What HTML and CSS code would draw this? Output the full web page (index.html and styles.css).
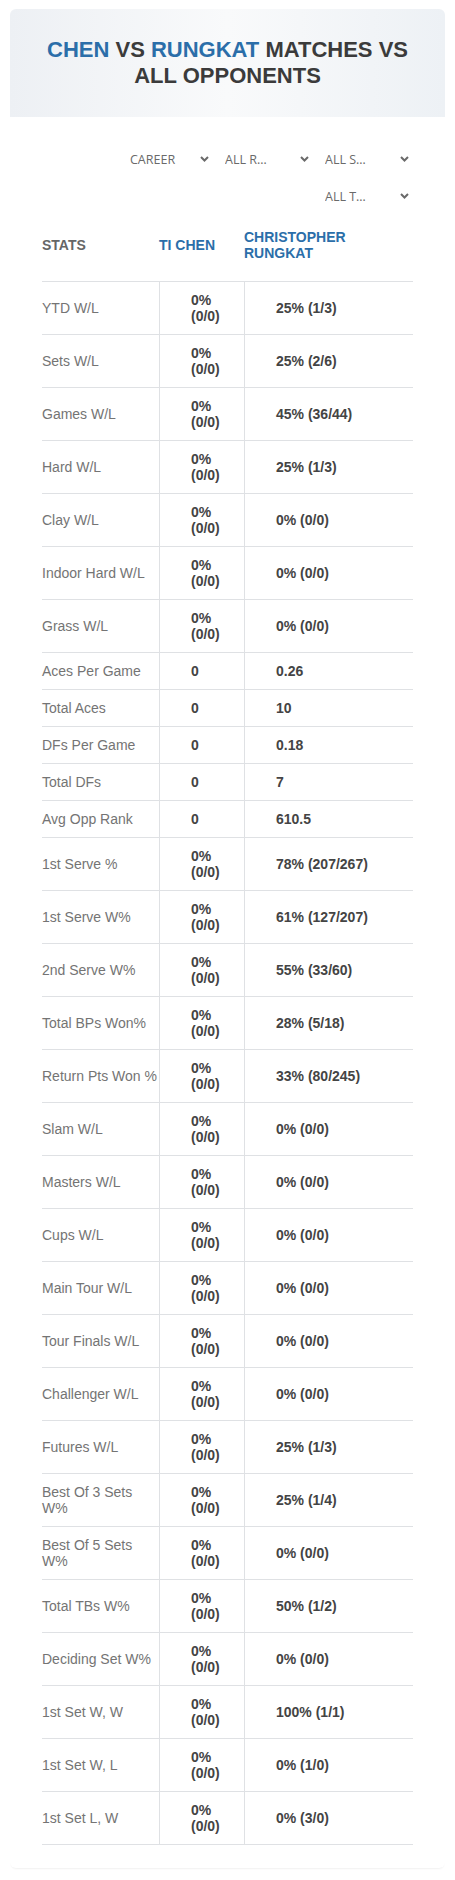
FILE: index.html
```html
<!DOCTYPE html>
<html lang="en">
<head>
<meta charset="utf-8">
<title>Chen vs Rungkat matches vs all opponents</title>
<link rel="stylesheet" href="styles.css">
</head>
<body>
<div class="card">
  <div class="card-head">
    <h1 class="title"><span class="hl">CHEN</span> VS <span class="hl">RUNGKAT</span> MATCHES VS ALL OPPONENTS</h1>
  </div>
  <div class="card-body">
    <div class="filters">
      <div class="select select-narrow"><span class="select-text">CAREER</span><svg class="chev" width="9" height="6" viewBox="0 0 9 6"><polyline points="1,1 4.5,4.5 8,1" fill="none" stroke="#6a6a6a" stroke-width="2"/></svg></div>
      <div class="select"><span class="select-text">ALL ROUNDS</span><svg class="chev" width="9" height="6" viewBox="0 0 9 6"><polyline points="1,1 4.5,4.5 8,1" fill="none" stroke="#6a6a6a" stroke-width="2"/></svg></div>
      <div class="select"><span class="select-text">ALL SURFACES</span><svg class="chev" width="9" height="6" viewBox="0 0 9 6"><polyline points="1,1 4.5,4.5 8,1" fill="none" stroke="#6a6a6a" stroke-width="2"/></svg></div>
      <div class="select"><span class="select-text">ALL TOURNAMENTS</span><svg class="chev" width="9" height="6" viewBox="0 0 9 6"><polyline points="1,1 4.5,4.5 8,1" fill="none" stroke="#6a6a6a" stroke-width="2"/></svg></div>
    </div>

    <div class="stats">
      <div class="row head">
        <div class="cell h-stat">STATS</div>
        <div class="cell h-player">TI CHEN</div>
        <div class="cell h-player">CHRISTOPHER RUNGKAT</div>
      </div>
      <div class="row"><div class="cell label">YTD W/L</div><div class="cell val">0% (0/0)</div><div class="cell val">25% (1/3)</div></div>
      <div class="row"><div class="cell label">Sets W/L</div><div class="cell val">0% (0/0)</div><div class="cell val">25% (2/6)</div></div>
      <div class="row"><div class="cell label">Games W/L</div><div class="cell val">0% (0/0)</div><div class="cell val">45% (36/44)</div></div>
      <div class="row"><div class="cell label">Hard W/L</div><div class="cell val">0% (0/0)</div><div class="cell val">25% (1/3)</div></div>
      <div class="row"><div class="cell label">Clay W/L</div><div class="cell val">0% (0/0)</div><div class="cell val">0% (0/0)</div></div>
      <div class="row"><div class="cell label">Indoor Hard W/L</div><div class="cell val">0% (0/0)</div><div class="cell val">0% (0/0)</div></div>
      <div class="row"><div class="cell label">Grass W/L</div><div class="cell val">0% (0/0)</div><div class="cell val">0% (0/0)</div></div>
      <div class="row"><div class="cell label">Aces Per Game</div><div class="cell val">0</div><div class="cell val">0.26</div></div>
      <div class="row"><div class="cell label">Total Aces</div><div class="cell val">0</div><div class="cell val">10</div></div>
      <div class="row"><div class="cell label">DFs Per Game</div><div class="cell val">0</div><div class="cell val">0.18</div></div>
      <div class="row"><div class="cell label">Total DFs</div><div class="cell val">0</div><div class="cell val">7</div></div>
      <div class="row"><div class="cell label">Avg Opp Rank</div><div class="cell val">0</div><div class="cell val">610.5</div></div>
      <div class="row"><div class="cell label">1st Serve %</div><div class="cell val">0% (0/0)</div><div class="cell val">78% (207/267)</div></div>
      <div class="row"><div class="cell label">1st Serve W%</div><div class="cell val">0% (0/0)</div><div class="cell val">61% (127/207)</div></div>
      <div class="row"><div class="cell label">2nd Serve W%</div><div class="cell val">0% (0/0)</div><div class="cell val">55% (33/60)</div></div>
      <div class="row"><div class="cell label">Total BPs Won%</div><div class="cell val">0% (0/0)</div><div class="cell val">28% (5/18)</div></div>
      <div class="row"><div class="cell label">Return Pts Won %</div><div class="cell val">0% (0/0)</div><div class="cell val">33% (80/245)</div></div>
      <div class="row"><div class="cell label">Slam W/L</div><div class="cell val">0% (0/0)</div><div class="cell val">0% (0/0)</div></div>
      <div class="row"><div class="cell label">Masters W/L</div><div class="cell val">0% (0/0)</div><div class="cell val">0% (0/0)</div></div>
      <div class="row"><div class="cell label">Cups W/L</div><div class="cell val">0% (0/0)</div><div class="cell val">0% (0/0)</div></div>
      <div class="row"><div class="cell label">Main Tour W/L</div><div class="cell val">0% (0/0)</div><div class="cell val">0% (0/0)</div></div>
      <div class="row"><div class="cell label">Tour Finals W/L</div><div class="cell val">0% (0/0)</div><div class="cell val">0% (0/0)</div></div>
      <div class="row"><div class="cell label">Challenger W/L</div><div class="cell val">0% (0/0)</div><div class="cell val">0% (0/0)</div></div>
      <div class="row"><div class="cell label">Futures W/L</div><div class="cell val">0% (0/0)</div><div class="cell val">25% (1/3)</div></div>
      <div class="row"><div class="cell label">Best Of 3 Sets W%</div><div class="cell val">0% (0/0)</div><div class="cell val">25% (1/4)</div></div>
      <div class="row"><div class="cell label">Best Of 5 Sets W%</div><div class="cell val">0% (0/0)</div><div class="cell val">0% (0/0)</div></div>
      <div class="row"><div class="cell label">Total TBs W%</div><div class="cell val">0% (0/0)</div><div class="cell val">50% (1/2)</div></div>
      <div class="row"><div class="cell label">Deciding Set W%</div><div class="cell val">0% (0/0)</div><div class="cell val">0% (0/0)</div></div>
      <div class="row"><div class="cell label">1st Set W, W</div><div class="cell val">0% (0/0)</div><div class="cell val">100% (1/1)</div></div>
      <div class="row"><div class="cell label">1st Set W, L</div><div class="cell val">0% (0/0)</div><div class="cell val">0% (1/0)</div></div>
      <div class="row last"><div class="cell label">1st Set L, W</div><div class="cell val">0% (0/0)</div><div class="cell val">0% (3/0)</div></div>
    </div>
  </div>
</div>
</body>
</html>
```

FILE: styles.css
```css
* { box-sizing: border-box; }

html, body {
  margin: 0;
  padding: 0;
  background: #ffffff;
}

body {
  font-family: "Liberation Sans", Arial, sans-serif;
  color: #444;
}

.card {
  margin: 9px 10px 12px;
  background: #fff;
  border-radius: 6px;
  box-shadow: 0 2px 2px -1px rgba(0, 0, 0, 0.06);
}

.card-head {
  background: linear-gradient(90deg, #edf0f4 0%, #f9fafb 50%, #edf1f5 100%);
  border-radius: 6px 6px 0 0;
  padding: 28px 20px;
  text-align: center;
}

.title {
  margin: 0;
  font-size: 22px;
  line-height: 26px;
  font-weight: 700;
  color: #3b3b3b;
}

.title .hl { color: #2b6ea9; }

.card-body {
  padding: 26px 32px 23px;
}

.filters {
  display: flex;
  flex-wrap: wrap;
  justify-content: flex-end;
  row-gap: 5px;
  margin-right: -2px;
}

.select {
  width: 100px;
  height: 32px;
  display: flex;
  align-items: center;
  justify-content: space-between;
  padding: 0 6px 0 10px;
  font-family: "Open Sans", "Liberation Sans", sans-serif;
  font-size: 12.5px;
  color: #6a6a6a;
}

.select-narrow { width: 95px; }

.select-text {
  width: 49px;
  overflow: hidden;
  white-space: nowrap;
  text-overflow: ellipsis;
}

.chev { flex: none; display: block; }

.stats {
  font-size: 14px;
  line-height: 16px;
}

.row {
  display: grid;
  grid-template-columns: 117px 85px 1fr;
  border-top: 1px solid #dfe1e4;
}

.row.last { border-bottom: 1px solid #dfe1e4; }

.row.head { border-top: none; }

.cell {
  display: flex;
  align-items: center;
}

.head .cell {
  padding: 17px 0 20px;
  font-weight: 700;
}

.h-stat { color: #666; }
.h-player { color: #2b6ea9; }

.label {
  padding: 10px 0;
  color: #747474;
}

.val {
  padding: 10px 8px 10px 31px;
  border-left: 1px solid #dfe1e4;
  font-weight: 700;
  color: #444;
}
```
